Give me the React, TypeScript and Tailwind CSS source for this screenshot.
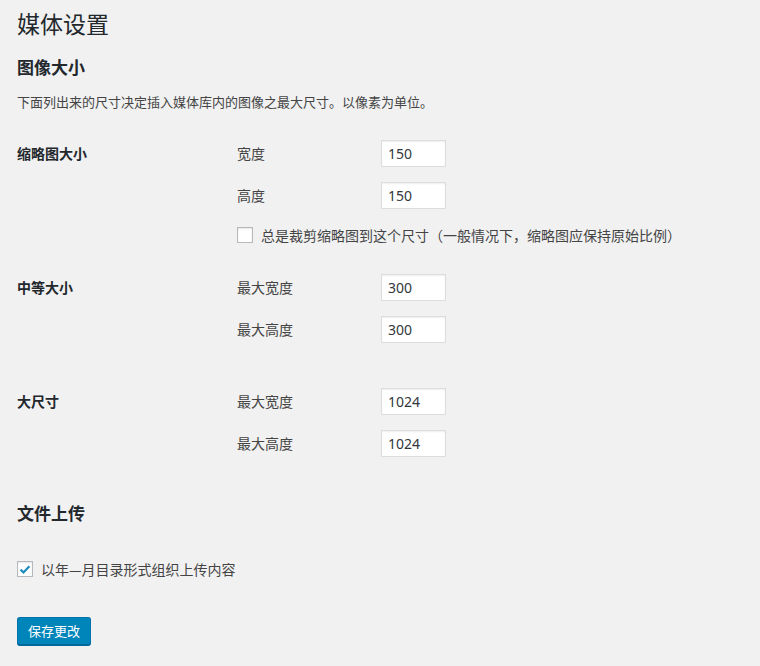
import { ReactNode } from "react";

const font = "font-['Noto_Sans','Noto_Sans_CJK_SC',sans-serif]";

function SizeInput({ value }: { value: string }) {
  return (
    <input
      type="text"
      defaultValue={value}
      className="h-[27px] w-[65px] border border-[#ddd] bg-white px-[6px] text-[14px] text-[#32373c] shadow-[inset_0_1px_2px_rgba(0,0,0,0.07)] outline-none"
    />
  );
}

function Field({ label, value, first }: { label: string; value: string; first?: boolean }) {
  return (
    <div className={`flex h-[27px] items-center ${first ? "" : "mt-[15px]"}`}>
      <span className="w-[144px] text-[14px] text-[#444]">{label}</span>
      <SizeInput value={value} />
    </div>
  );
}

function Checkbox({ checked }: { checked?: boolean }) {
  return (
    <span className="flex h-[16px] w-[16px] shrink-0 items-center justify-center border border-[#b4b9be] bg-white shadow-[inset_0_1px_2px_rgba(0,0,0,0.1)]">
      {checked && (
        <svg viewBox="0 0 16 16" className="h-[15px] w-[15px]">
          <path d="M3 8.2 L6.3 11.4 L13 4.2" fill="none" stroke="#1e8cbe" strokeWidth="2.6" />
        </svg>
      )}
    </span>
  );
}

function Section({ title, children, className }: { title: string; children: ReactNode; className?: string }) {
  return (
    <div className={`flex ${className ?? ""}`}>
      <div className="flex h-[27px] w-[220px] items-center text-[14px] font-bold text-[#23282d]">{title}</div>
      <div className="flex flex-col">{children}</div>
    </div>
  );
}

export default function App() {
  return (
    <div className={`min-h-[666px] w-full bg-[#f1f1f1] pl-[17px] ${font}`}>
      <h1 className="pt-[10px] text-[23px] leading-[29px] text-[#23282d]">媒体设置</h1>
      <h2 className="mt-[17px] text-[17px] font-bold leading-[24px] text-[#23282d]">图像大小</h2>
      <p className="mt-[12px] text-[13px] leading-[20px] text-[#444]">
        下面列出来的尺寸决定插入媒体库内的图像之最大尺寸。以像素为单位。
      </p>

      <Section title="缩略图大小" className="mt-[28px]">
        <Field label="宽度" value="150" first />
        <Field label="高度" value="150" />
        <label className="mt-[13px] flex h-[26px] items-center gap-[8px] text-[14px] text-[#444]">
          <Checkbox />
          <span>总是裁剪缩略图到这个尺寸（一般情况下，缩略图应保持原始比例）</span>
        </label>
      </Section>

      <Section title="中等大小" className="mt-[26px]">
        <Field label="最大宽度" value="300" first />
        <Field label="最大高度" value="300" />
      </Section>

      <Section title="大尺寸" className="mt-[45px]">
        <Field label="最大宽度" value="1024" first />
        <Field label="最大高度" value="1024" />
      </Section>

      <h2 className="mt-[45px] text-[17px] font-bold leading-[24px] text-[#23282d]">文件上传</h2>

      <label className="mt-[30px] flex h-[26px] items-center gap-[8px] text-[14px] text-[#444]">
        <Checkbox checked />
        <span>
          以年<span className="font-['Noto_Sans_CJK_SC',sans-serif]">—</span>月目录形式组织上传内容
        </span>
      </label>

      <button
        type="button"
        className="mt-[35px] h-[28px] rounded-[3px] border border-[#0073aa] border-b-[#006799] bg-[#0085ba] px-[10px] text-[13px] leading-[26px] text-white shadow-[0_1px_0_#006799]"
      >
        保存更改
      </button>
    </div>
  );
}
